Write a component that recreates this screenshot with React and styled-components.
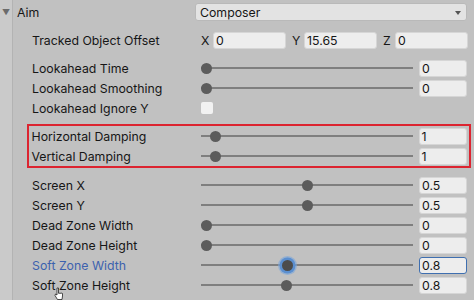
import React from 'react';
import styled, { createGlobalStyle } from 'styled-components';

const GlobalStyle = createGlobalStyle`
    html, body { margin: 0; padding: 0; background: #c1c1c1; }
    body { font-family: 'Inter', 'Liberation Sans', sans-serif; }
`

const sliders = [
    { label: 'Lookahead Time', pos: 0, value: '0' },
    { label: 'Lookahead Smoothing', pos: 0, value: '0' },
];
const damping = [
    { label: 'Horizontal Damping', pos: 9, value: '1' },
    { label: 'Vertical Damping', pos: 9, value: '1' },
];
const zones = [
    { label: 'Screen X', pos: 101, value: '0.5' },
    { label: 'Screen Y', pos: 101, value: '0.5' },
    { label: 'Dead Zone Width', pos: 0, value: '0' },
    { label: 'Dead Zone Height', pos: 0, value: '0' },
    { label: 'Soft Zone Width', pos: 81, value: '0.8', active: true },
    { label: 'Soft Zone Height', pos: 80, value: '0.8' },
];

const SliderRow = ({ label, pos, value, active, inset }) => (
    <Row $inset={inset}>
        <Label $active={active}>{label}</Label>
        <Slider>
            <Track />
            <Thumb style={{ left: pos }} $active={active} />
        </Slider>
        <NumberField $active={active}>{value}</NumberField>
    </Row>
);

const App = () => {
    return (
        <>
            <GlobalStyle />
            <Panel>
                <Header>
                    <Caret>▼</Caret>
                    <HeaderLabel>Aim</HeaderLabel>
                    <Dropdown>
                        Composer
                        <DropArrow />
                    </Dropdown>
                </Header>
                <Group>
                    <Row>
                        <Label>Tracked Object Offset</Label>
                        <Vector>
                            {[['X', '0'], ['Y', '15.65'], ['Z', '0']].map(([axis, v]) => (
                                <Axis key={axis}>
                                    <AxisName>{axis}</AxisName>
                                    <TextField>{v}</TextField>
                                </Axis>
                            ))}
                        </Vector>
                    </Row>
                </Group>
                <Group>
                    {sliders.map((s) => <SliderRow key={s.label} {...s} />)}
                    <Row>
                        <Label>Lookahead Ignore Y</Label>
                        <Checkbox />
                    </Row>
                </Group>
                <Highlight>
                    {damping.map((s) => <SliderRow key={s.label} {...s} inset />)}
                </Highlight>
                <Group $tight>
                    {zones.map((s) => <SliderRow key={s.label} {...s} />)}
                </Group>
                <Cursor viewBox="0 0 10 14">
                    <path d="M3 1 L3 8 L1.5 7 L1 8.5 L3.5 12.5 L8 12.5 L8.5 9 L8.5 6.5 L7 6 L6 6.5 L5 6 L4.5 6.3 L4.5 1 Z" fill="#fff" stroke="#222" strokeWidth="0.8" />
                </Cursor>
            </Panel>
        </>
    );
};

export default App;

const Panel = styled.div`
    position: relative;
    width: 474px;
    height: 300px;
    overflow: hidden;
    padding-top: 2px;
    box-sizing: border-box;
    background: linear-gradient(to right, #cacaca 0 12px, #b3b3b3 12px 13px, #c1c1c1 13px);
    color: #161616;
    font-size: 12.3px;
`
const Header = styled.div`
    display: flex;
    align-items: center;
    height: 20px;
    padding: 0 7px 0 2px;
`
const Caret = styled.span`
    width: 15px;
    font-size: 8px;
    color: #6b6b6b;
`
const HeaderLabel = styled.span`
    flex: 1;
`
const Dropdown = styled.div`
    position: relative;
    display: flex;
    align-items: center;
    width: 272px;
    height: 18px;
    padding-left: 4px;
    box-sizing: border-box;
    background: #e3e3e3;
    border: 1px solid #b9b9b9;
    border-radius: 3px;
`
const DropArrow = styled.span`
    position: absolute;
    right: 5px;
    top: 7px;
    border-left: 3.5px solid transparent;
    border-right: 3.5px solid transparent;
    border-top: 4px solid #555;
`
const Group = styled.div`
    margin-top: ${(p) => (p.$tight ? '7px' : '8px')};
    &:first-of-type { margin-top: 9px; }
`
const Highlight = styled.div`
    margin: 6px 3px 0 27px;
    border: 2.5px solid #dc2430;
`
const Row = styled.div`
    display: flex;
    align-items: center;
    height: 20px;
    padding: 0 ${(p) => (p.$inset ? '0' : '6px')} 0 ${(p) => (p.$inset ? '2.5px' : '32px')};
`
const Label = styled.div`
    width: 169px;
    flex-shrink: 0;
    white-space: nowrap;
    color: ${(p) => (p.$active ? '#3d62ae' : '#161616')};
`
const Slider = styled.div`
    position: relative;
    width: 212px;
    height: 20px;
    margin-right: 6px;
`
const Track = styled.div`
    position: absolute;
    left: 0;
    right: 0;
    top: 9px;
    height: 2px;
    background: #7f7f7f;
`
const Thumb = styled.div`
    position: absolute;
    top: 4.5px;
    width: 11px;
    height: 11px;
    border-radius: 50%;
    background: ${(p) => (p.$active ? '#4c4c4c' : '#5c5c5c')};
    box-shadow: ${(p) => (p.$active ? '0 0 0 2.5px #5b8fd0, 0 0 0 4px rgba(120,165,220,0.6)' : 'none')};
`
const NumberField = styled.div`
    width: 48px;
    height: 17px;
    box-sizing: border-box;
    padding-left: 2px;
    display: flex;
    align-items: center;
    background: #ededed;
    border: 1px solid ${(p) => (p.$active ? '#3f6fb0' : '#d6d6d6')};
    border-radius: 3px;
`
const Vector = styled.div`
    display: flex;
    gap: 6px;
`
const Axis = styled.div`
    display: flex;
    align-items: center;
`
const AxisName = styled.span`
    width: 12px;
`
const TextField = styled(NumberField)`
    width: 73px;
`
const Checkbox = styled.div`
    width: 12px;
    height: 12px;
    background: #f2f2f2;
    border-radius: 2px;
`
const Cursor = styled.svg`
    position: absolute;
    left: 54px;
    top: 287px;
    width: 10px;
    height: 14px;
`
